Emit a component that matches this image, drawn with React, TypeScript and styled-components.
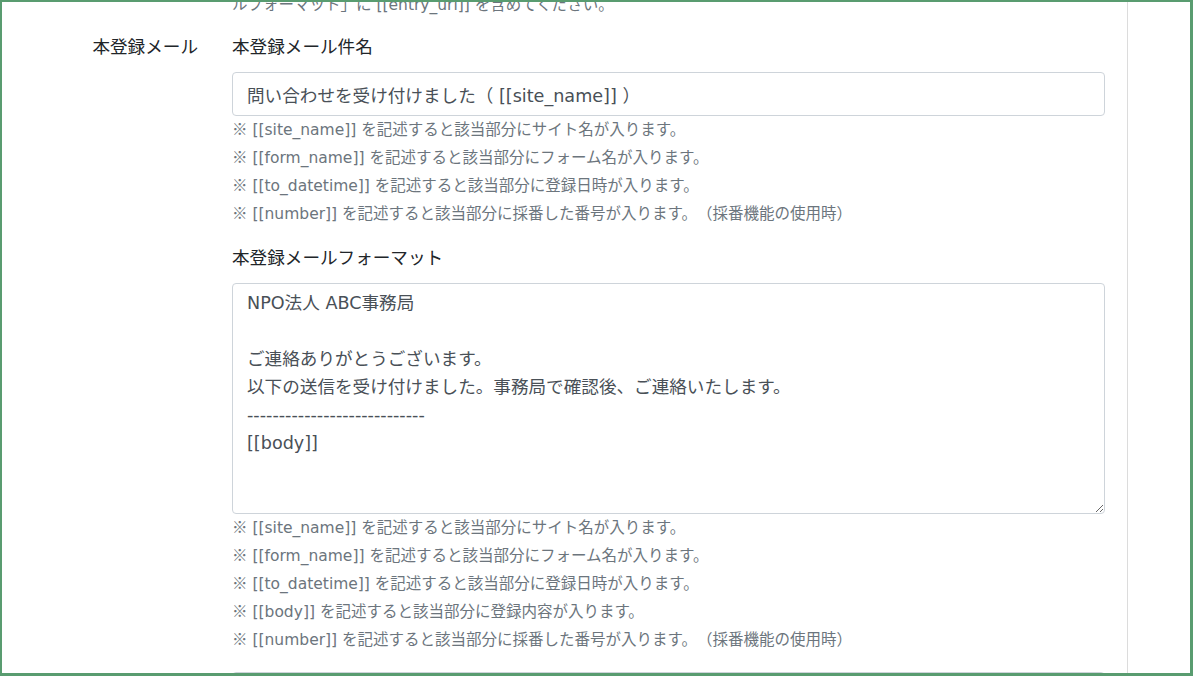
import React from 'react';
import styled, { createGlobalStyle } from 'styled-components';

const GlobalStyle = createGlobalStyle`
    html, body {
        margin: 0;
        padding: 0;
        background: #fff;
    }
    body {
        font-family: "DejaVu Sans", "Noto Sans CJK JP", sans-serif;
        color: #212529;
        text-spacing-trim: space-all;
    }
`;

const subjectHelps = [
    { tag: '[[site_name]]', text: 'を記述すると該当部分にサイト名が入ります。' },
    { tag: '[[form_name]]', text: 'を記述すると該当部分にフォーム名が入ります。' },
    { tag: '[[to_datetime]]', text: 'を記述すると該当部分に登録日時が入ります。' },
    { tag: '[[number]]', text: 'を記述すると該当部分に採番した番号が入ります。（採番機能の使用時）' },
];

const formatHelps = [
    { tag: '[[site_name]]', text: 'を記述すると該当部分にサイト名が入ります。' },
    { tag: '[[form_name]]', text: 'を記述すると該当部分にフォーム名が入ります。' },
    { tag: '[[to_datetime]]', text: 'を記述すると該当部分に登録日時が入ります。' },
    { tag: '[[body]]', text: 'を記述すると該当部分に登録内容が入ります。' },
    { tag: '[[number]]', text: 'を記述すると該当部分に採番した番号が入ります。（採番機能の使用時）' },
];

const mailBody = [
    'NPO法人 ABC事務局',
    '',
    'ご連絡ありがとうございます。',
    '以下の送信を受け付けました。事務局で確認後、ご連絡いたします。',
    '----------------------------',
    '[[body]]',
].join('\n');

type Help = { tag: string; text: string };

// ※ comes from the CJK font so it gets its full width
const HelpList = ({ items }: { items: Help[] }) => (
    <>
        {items.map((h) => (
            <HelpText key={h.tag}>
                <Mark>※</Mark> {h.tag} {h.text}
            </HelpText>
        ))}
    </>
);

const App = () => {
    return (
        <>
            <GlobalStyle />
            <Frame>
                <Main>
                    <FormRow>
                        <div />
                        <Field>
                            <HelpText>ルフォーマット」に [[entry_url]] を含めてください。</HelpText>
                        </Field>
                    </FormRow>
                    <FormRow spaced>
                        <RowLabel>本登録メール</RowLabel>
                        <Field>
                            <FieldLabel>本登録メール件名</FieldLabel>
                            <TextInput
                                type="text"
                                readOnly
                                value="問い合わせを受け付けました（ [[site_name]] ）"
                            />
                            <HelpList items={subjectHelps} />

                            <FieldLabel spaced>本登録メールフォーマット</FieldLabel>
                            <TextArea readOnly defaultValue={mailBody} />
                            <HelpList items={formatHelps} />

                            <NextInput />
                        </Field>
                    </FormRow>
                </Main>
                <Side />
            </Frame>
        </>
    );
};

const Frame = styled.div`
    box-sizing: border-box;
    width: 1193px;
    height: 676px;
    border-style: solid;
    border-color: #599c70;
    border-width: 2px 3px 3px 2px;
    overflow: hidden;
    display: flex;
    background: #fff;
`;

const Main = styled.div`
    width: 1125px;
    flex: none;
    margin-top: -11px;
`;

const Side = styled.div`
    flex: 1;
    border-left: 1px solid #dcdcdc;
`;

const FormRow = styled.div<{ spaced?: boolean }>`
    display: grid;
    grid-template-columns: 196px 873px;
    column-gap: 34px;
    margin-top: ${(p) => (p.spaced ? '14px' : '0')};
`;

const RowLabel = styled.div`
    text-align: right;
    font-size: 17.6px;
    line-height: 28px;
    color: #212529;
`;

const Field = styled.div`
    display: flex;
    flex-direction: column;
`;

const FieldLabel = styled.div<{ spaced?: boolean }>`
    font-size: 17.6px;
    line-height: 28px;
    color: #212529;
    margin-top: ${(p) => (p.spaced ? '16px' : '0')};
    margin-bottom: 11px;
`;

const TextInput = styled.input`
    box-sizing: border-box;
    width: 100%;
    height: 44px;
    padding: 7px 14px;
    font-family: inherit;
    font-size: 17.6px;
    line-height: 28px;
    color: #495057;
    background: #fff;
    border: 1px solid #ced4da;
    border-radius: 4px;
    outline: none;
    text-spacing-trim: space-all;
`;

const TextArea = styled.textarea`
    box-sizing: border-box;
    width: 100%;
    height: 231px;
    padding: 5px 14px;
    font-family: inherit;
    font-size: 17.6px;
    line-height: 28px;
    color: #495057;
    background: #fff;
    border: 1px solid #ced4da;
    border-radius: 4px;
    outline: none;
    resize: vertical;
    text-spacing-trim: space-all;
`;

const HelpText = styled.div`
    height: 28px;
    font-size: 15.5px;
    line-height: 28px;
    color: #6c757d;
    white-space: nowrap;
`;

const Mark = styled.span`
    font-family: "Noto Sans CJK JP", sans-serif;
    line-height: 1;
`;

const NextInput = styled.div`
    box-sizing: border-box;
    height: 44px;
    margin-top: 18px;
    border: 1px solid #ced4da;
    border-radius: 4px;
`;

export default App;
